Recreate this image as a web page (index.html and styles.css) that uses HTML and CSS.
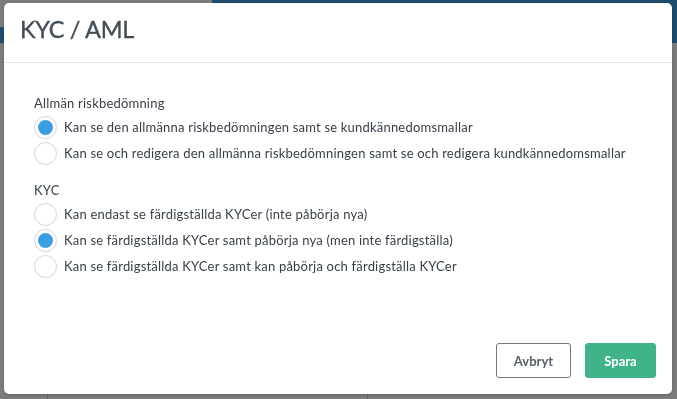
FILE: index.html
```html
<!DOCTYPE html>
<html lang="sv">
<head>
<meta charset="utf-8">
<title>KYC / AML</title>
<link rel="stylesheet" href="styles.css">
</head>
<body>
<div class="page">
  <div class="page-top"><div class="page-top-gap"></div><div class="page-top-blue"></div></div>
  <div class="page-band"></div>
  <div class="page-lines"><span class="vl vl1"></span><span class="vl vl2"></span></div>
</div>
<div class="overlay">
  <div class="modal">
    <div class="modal-header">
      <h1 class="modal-title">KYC / AML</h1>
    </div>
    <div class="modal-body">
      <div class="group">
        <div class="group-label">Allmän riskbedömning</div>
        <label class="option"><span class="radio checked"></span><span class="option-text">Kan se den allmänna riskbedömningen samt se kundkännedomsmallar</span></label>
        <label class="option"><span class="radio"></span><span class="option-text">Kan se och redigera den allmänna riskbedömningen samt se och redigera kundkännedomsmallar</span></label>
      </div>
      <div class="group">
        <div class="group-label">KYC</div>
        <label class="option"><span class="radio"></span><span class="option-text">Kan endast se färdigställda KYCer (inte påbörja nya)</span></label>
        <label class="option"><span class="radio checked"></span><span class="option-text">Kan se färdigställda KYCer samt påbörja nya (men inte färdigställa)</span></label>
        <label class="option"><span class="radio"></span><span class="option-text">Kan se färdigställda KYCer samt kan påbörja och färdigställa KYCer</span></label>
      </div>
    </div>
    <div class="modal-footer">
      <button class="btn btn-outline">Avbryt</button>
      <button class="btn btn-primary">Spara</button>
    </div>
  </div>
</div>
</body>
</html>
```
FILE: styles.css
```css
html, body {
  margin: 0;
  padding: 0;
  height: 100%;
}
body {
  background: #7c7c7c;
  font-family: Lato, "Open Sans", sans-serif;
  overflow: hidden;
}
.page {
  height: 100%;
  display: flex;
  flex-direction: column;
}
.page-top {
  display: flex;
  height: 27px;
}
.page-top-gap {
  width: 212px;
}
.page-top-blue {
  flex: 1;
  background: #1d4d6b;
}
.page-band {
  height: 16px;
  background: #1d4d6b;
}
.page-lines {
  flex: 1;
  display: flex;
  align-items: flex-end;
}
.vl {
  display: block;
  width: 1px;
  height: 8px;
  background: #666;
}
.vl1 { margin-left: 47px; }
.vl2 { margin-left: 319px; }

.overlay {
  position: fixed;
  inset: 0;
  padding: 3px 5px 5px 4px;
  display: flex;
}
.modal {
  flex: 1;
  background: #fff;
  border-radius: 5px;
  display: flex;
  flex-direction: column;
  box-shadow: 0 1px 3px rgba(0,0,0,0.2);
}
.modal-header {
  height: 60px;
  box-sizing: border-box;
  padding: 0 16px 7px;
  border-bottom: 1px solid #e3e8ee;
  display: flex;
  align-items: center;
}
.modal-title {
  margin: 0;
  font-size: 23.5px;
  font-weight: 400;
  color: #434d58;
  letter-spacing: -0.3px;
  -webkit-text-stroke: 0.35px #434d58;
}
.modal-body {
  flex: 1;
  padding: 31px 30px 0 30px;
  display: flex;
  flex-direction: column;
  gap: 17px;
}
.group {
  display: flex;
  flex-direction: column;
  gap: 4px;
}
.group-label {
  font-size: 13px;
  line-height: 18px;
  color: #363f49;
  letter-spacing: 0.2px;
}
.option {
  display: flex;
  align-items: center;
  gap: 7px;
  height: 22px;
  font-size: 13px;
  color: #363f49;
  letter-spacing: 0.2px;
}
.radio {
  width: 21px;
  height: 21px;
  border: 1px solid #cfd6dd;
  border-radius: 50%;
  background: #fff;
  box-sizing: content-box;
  position: relative;
  flex: none;
}
.radio.checked::after {
  content: "";
  position: absolute;
  left: 3px;
  top: 3px;
  width: 15px;
  height: 15px;
  border-radius: 50%;
  background: #3a9ee2;
}
.modal-footer {
  display: flex;
  justify-content: flex-end;
  gap: 14px;
  padding: 0 16px 16px;
}
.btn {
  height: 35px;
  border-radius: 3px;
  font-family: inherit;
  font-size: 13px;
  font-weight: 700;
  padding: 0 12px;
  cursor: pointer;
}
.btn-outline {
  background: #fff;
  border: 1px solid #6f7a85;
  color: #56606b;
  width: 75px;
}
.btn-primary {
  background: #41b389;
  border: 1px solid #41b389;
  color: #fff;
  width: 71px;
}
```
